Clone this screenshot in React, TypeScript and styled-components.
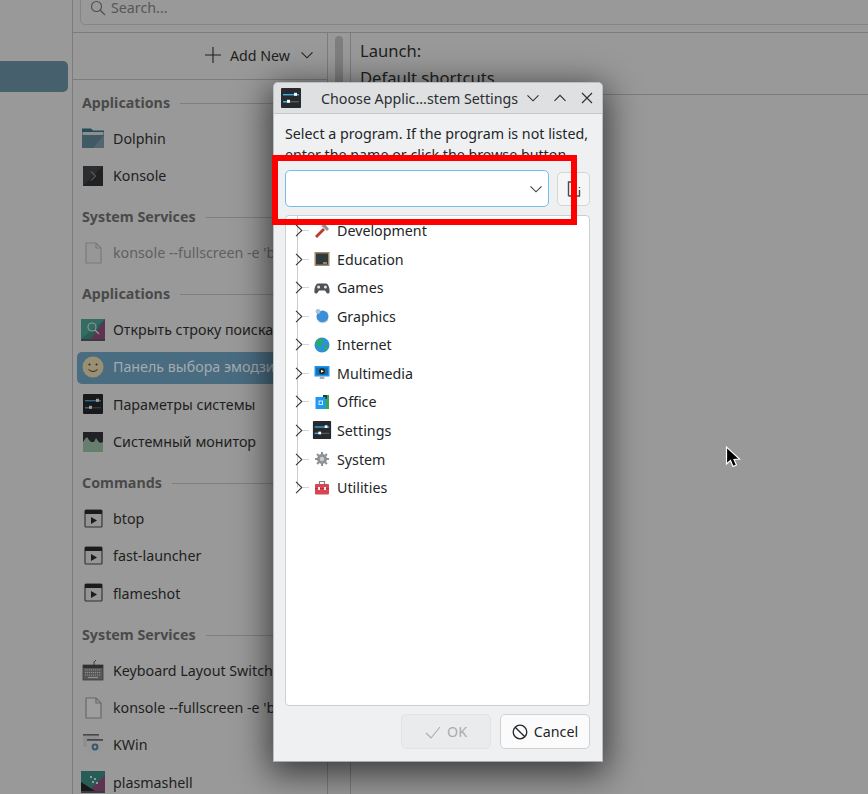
import React from "react";
import styled, { createGlobalStyle } from "styled-components";

const Global = createGlobalStyle`
  html, body { margin: 0; padding: 0; background: #999; }
  body { font-family: "Noto Sans", sans-serif; font-size: 14.25px; }
  * { box-sizing: border-box; }
`;

/* ---------- dimmed parent window ---------- */
const Page = styled.div`
  position: relative; width: 868px; height: 794px; overflow: hidden;
  display: flex; background: #999; color: #1e1f20;
`;
const Sidebar = styled.aside`
  width: 73px; flex: none; padding-top: 61px; border-right: 1px solid #7c7c7c;
`;
const SidebarPill = styled.div`
  width: 68px; height: 31px; background: #47606e; border-radius: 0 5px 5px 0;
`;
const Main = styled.main`flex: 1; min-width: 0; display: flex; flex-direction: column;`;
const SearchBar = styled.div`
  height: 33px; flex: none; padding-left: 7px; border-bottom: 1px solid #7c7c7c; overflow: hidden;
`;
const SearchBox = styled.div`
  height: 35px; margin-top: -10px; margin-right: -12px; border: 1px solid #858585; border-radius: 5px;
  display: flex; align-items: center; gap: 5px; padding: 0 9px; color: #575757;
`;
const Columns = styled.div`flex: 1; min-height: 0; display: flex;`;
const ListColumn = styled.section`
  width: 255px; flex: none; border-right: 1px solid #7c7c7c; display: flex; flex-direction: column;
`;
const AddBar = styled.div`
  height: 47px; flex: none; border-bottom: 1px solid #7c7c7c; display: flex; align-items: center;
  justify-content: flex-end; padding: 0 13px 2px 0; gap: 9px; color: #1e1f20;
`;
const AddChevron = styled.span`display: block; margin-left: 1px; height: 14px; svg { display: block; }`;
const List = styled.div`
  padding: 1px 0 0 4px; overflow: hidden; flex: 1; min-height: 0; display: flex; flex-direction: column;
`;
const SectionHead = styled.div`
  height: 39.67px; flex: none; padding: 12px 0 0 5px; display: flex; align-items: flex-start; gap: 10px;
  font-weight: 700; color: #4a4a4a; line-height: 20px;
  &::after { content: ""; flex: 1; height: 1px; background: #7f7f7f; margin-top: 10px; }
`;
const Row = styled.div<{ $selected?: boolean; $muted?: boolean }>`
  height: 31.33px; flex: none; margin: 3px 0; width: 320px; padding: 0 0 2px 5px; display: flex; align-items: center; gap: 9px;
  border-radius: 5px; white-space: nowrap;
  background: ${(p) => (p.$selected ? "#4a6c80" : "transparent")};
  color: ${(p) => (p.$selected ? "#a3abaf" : p.$muted ? "#606060" : "#1e1f20")};
`;
const ListIcon = styled.span`
  width: 22px; height: 22px; flex: none; display: block; filter: brightness(0.62) saturate(0.75);
  svg { display: block; }
`;
const ScrollTrack = styled.div`
  width: 23px; flex: none; border-right: 1px solid #7c7c7c; padding: 3px 7px 0 7px;
`;
const ScrollThumb = styled.div`
  height: 200px; background: #7e7e7e; border-radius: 4px;
`;
const RightPanel = styled.section`flex: 1; min-width: 0; display: flex; flex-direction: column;`;
const RightHead = styled.div`
  height: 62px; flex: none; border-bottom: 1px solid #7c7c7c; padding: 4px 0 0 9px; line-height: 27px; font-size: 16.6px;
  overflow: hidden; white-space: nowrap;
`;

/* ---------- dialog ---------- */
const Dialog = styled.div`
  position: absolute; left: 273px; top: 82px; width: 330px; height: 680px;
  display: flex; flex-direction: column; background: #eff0f1; color: #232629;
  border: 1px solid #bcbebf; border-bottom-color: #a9abad; border-radius: 5px 5px 0 0;
  box-shadow: 0 8px 34px 4px rgba(0, 0, 0, 0.62);
`;
const TitleBar = styled.header`
  height: 31px; flex: none; display: flex; align-items: center; padding: 0 8px 0 6px;
  background: #dee0e2; border-bottom: 1px solid #c4c6c8; border-radius: 4px 4px 0 0;
`;
const TitleText = styled.div`flex: 1; margin-left: 19px; white-space: nowrap; color: #2b2e31;`;
const TitleButtons = styled.div`display: flex; gap: 13px; color: #2b2e31; svg { display: block; }`;
const Body = styled.div`flex: 1; min-height: 0; display: flex; flex-direction: column; padding: 9px 12px 12px 11px;`;
const Prompt = styled.p`
  margin: 0; height: 47px; line-height: 21px; white-space: nowrap; overflow: hidden;
`;
const PickRow = styled.div`display: flex; align-items: center; gap: 8px; height: 37px; flex: none;`;
const Combo = styled.div`
  flex: 1; height: 37px; background: #fff; border: 1px solid #6ec0ee; border-radius: 5px;
  display: flex; align-items: center; justify-content: flex-end; padding-right: 5px; color: #3a3d40;
`;
const BrowseButton = styled.div`
  width: 33px; height: 34px; flex: none; background: #f5f6f6; border: 1px solid #d3d5d6; border-radius: 5px;
  display: flex; align-items: center; justify-content: center; color: #4a4d4f;
`;
const Tree = styled.div`
  flex: 1; min-height: 0; margin-top: 8px; padding-top: 0.4px; background: #fff; border: 1px solid #cdcfd0; border-radius: 4px;
`;
const TreeRow = styled.div`height: 28.56px; display: flex; align-items: center; white-space: nowrap;`;
const Branch = styled.span<{ $last?: boolean }>`
  width: 28px; height: 100%; flex: none; padding-left: 9px; display: flex; align-items: center; color: #33363a;
  background:
    linear-gradient(#c9cbcc, #c9cbcc) 11px 0 / 1px ${(p) => (p.$last ? "50%" : "100%")} no-repeat,
    linear-gradient(#d4d5d6, #d4d5d6) 17px 50% / 6px 1px no-repeat;
  svg { display: block; }
`;
const TreeIcon = styled.span`
  width: 16px; height: 16px; flex: none; margin-right: 7px; display: flex; align-items: center; justify-content: center;
  svg { display: block; flex: none; }
`;
const Actions = styled.footer`display: flex; justify-content: flex-end; gap: 9px; margin-top: 8px; flex: none;`;
const ActionButton = styled.button<{ $disabled?: boolean }>`
  width: 90px; height: 35px; display: flex; align-items: center; justify-content: center; gap: 6px;
  font: inherit; border-radius: 5px; padding: 0;
  background: ${(p) => (p.$disabled ? "#eaebec" : "#fbfbfc")};
  border: 1px solid ${(p) => (p.$disabled ? "#e2e3e4" : "#cfd1d2")};
  color: ${(p) => (p.$disabled ? "#a9abad" : "#232629")};
  svg { display: block; }
`;

/* ---------- overlays ---------- */
const RedFrame = styled.div`
  position: absolute; left: 272px; top: 155px; width: 305px; height: 70px; border: 6px solid #ff0000;
`;
const Cursor = styled.svg`position: absolute; left: 724px; top: 445px;`;

/* ---------- icons ---------- */
const Chevron = ({ up }: { up?: boolean }) => (
  <svg width="14" height="14" viewBox="0 0 14 14" fill="none" stroke="currentColor" strokeWidth="1.1">
    <path d={up ? "M1.5 9.8 L7 4.3 L12.5 9.8" : "M1.5 4.3 L7 9.8 L12.5 4.3"} />
  </svg>
);
const ChevronRight = () => (
  <svg width="8" height="13" viewBox="0 0 8 13" fill="none" stroke="currentColor" strokeWidth="1.1">
    <path d="M1 0.8 L6.8 6.5 L1 12.2" />
  </svg>
);
const SettingsIcon = ({ s = 22 }: { s?: number }) => (
  <svg width={s} height={s} viewBox="0 0 22 22">
    <rect x="1" y="1" width="20" height="20" rx="1" fill="#26292d" />
    <rect x="3" y="7" width="16" height="1.4" fill="#3daee9" />
    <rect x="14" y="5.8" width="3" height="3" fill="#fcfcfc" />
    <rect x="3" y="14" width="16" height="1.4" fill="#55595e" />
    <rect x="3" y="14" width="6" height="1.4" fill="#3daee9" />
    <rect x="7" y="12.8" width="3" height="3" fill="#fcfcfc" />
  </svg>
);
const FolderIcon = () => (
  <svg width="22" height="22" viewBox="0 0 22 22">
    <path d="M0 1.5 H9 L11 3.5 H22 V21 H0 Z" fill="#2f7d9e" />
    <rect x="0.5" y="5" width="21" height="3" fill="#dfe7ea" />
    <path d="M0 8 H22 V21 H0 Z" fill="#5b93ab" />
    <path d="M11 21 L22 8 V21 Z" fill="#7da6b7" />
  </svg>
);
const KonsoleIcon = () => (
  <svg width="22" height="22" viewBox="0 0 22 22">
    <rect x="1" y="1" width="20" height="20" fill="#46484a" />
    <path d="M1 21 L21 1 V21 Z" fill="#333537" />
    <path d="M9 6.5 L13.5 11 L9 15.5" fill="none" stroke="#c4c6c8" strokeWidth="1" />
  </svg>
);
const FileIcon = ({ dim }: { dim?: boolean }) => (
  <svg width="22" height="22" viewBox="0 0 22 22" fill={dim ? "#f4f4f4" : "#ffffff"} stroke={dim ? "#c4c4c4" : "#a8a8a8"} strokeWidth="1.2">
    <path d="M4 1 H14 L19 6 V21 H4 Z" />
    <path d="M14 1 V6 H19" fill="none" />
  </svg>
);
const SearchTileIcon = () => (
  <svg width="24" height="22" viewBox="0 0 24 22" style={{ marginLeft: -1 }}>
    <rect x="0" y="0" width="24" height="20" fill="#2a9d8f" />
    <path d="M24 0 V20 H10 Z" fill="#a94a8c" />
    <path d="M0 20 L24 0 H0 Z" fill="#39b5a2" />
    <circle cx="11" cy="8" r="4" fill="none" stroke="#f3f3f3" strokeWidth="1.1" />
    <path d="M14 11 L18 15" stroke="#f3f3f3" strokeWidth="1.3" />
    <rect x="0" y="20" width="24" height="2" fill="#5d6166" />
  </svg>
);
const SmileIcon = () => (
  <svg width="22" height="22" viewBox="0 0 22 22">
    <circle cx="11" cy="11" r="10.5" fill="#fde6a8" />
    <circle cx="7.5" cy="8.5" r="1" fill="#4c4331" />
    <circle cx="14.5" cy="8.5" r="1" fill="#4c4331" />
    <path d="M6.5 13.5 Q11 17.5 15.5 13.5" fill="none" stroke="#4c4331" strokeWidth="1" />
  </svg>
);
const MonitorIcon = () => (
  <svg width="22" height="22" viewBox="0 0 22 22">
    <rect x="1" y="1" width="20" height="20" fill="#31363b" />
    <path d="M1 21 V11 L3 8 L5 6 L7 9 L9 11 L12 11 L14 7 L16 10 L18 12 L21 11 V21 Z" fill="#9ad0a8" />
  </svg>
);
const RunIcon = () => (
  <svg width="22" height="22" viewBox="0 0 22 22">
    <rect x="3" y="2" width="17" height="17" rx="1" fill="#f0f0f0" stroke="#4a4d50" strokeWidth="1.1" />
    <rect x="3" y="2" width="17" height="4" fill="#2a2c2f" />
    <path d="M9 9 L15 12.5 L9 16 Z" fill="#2a2c2f" />
  </svg>
);
const KeyboardIcon = () => (
  <svg width="22" height="22" viewBox="0 0 22 22">
    <path d="M12 6 V3 L14 1" fill="none" stroke="#5a5d60" strokeWidth="1" />
    <rect x="1" y="6" width="20" height="15" fill="#8a8d90" stroke="#5e6164" strokeWidth="0.8" />
    <rect x="1" y="6" width="20" height="3" fill="#4a4d50" />
    <path d="M3 11 H19 M3 13.5 H19 M3 16 H19" stroke="#e8e8e8" strokeWidth="1.2" strokeDasharray="1.2 0.8" />
    <path d="M6 18.5 H16" stroke="#e8e8e8" strokeWidth="1.2" />
  </svg>
);
const KWinIcon = () => (
  <svg width="22" height="22" viewBox="0 0 22 22">
    <rect x="1" y="0" width="16" height="13" fill="#e4e6e8" />
    <rect x="1" y="0" width="16" height="1.6" fill="#70757a" />
    <rect x="5" y="5" width="16" height="14" fill="#f2f3f4" />
    <rect x="5" y="5" width="16" height="1.8" fill="#70757a" />
    <circle cx="13" cy="13" r="3.4" fill="#4a90b8" />
    <circle cx="13" cy="13" r="1.4" fill="#f2f3f4" />
  </svg>
);
const PlasmaIcon = () => (
  <svg width="24" height="22" viewBox="0 0 24 22" style={{ marginLeft: -1 }}>
    <rect x="0" y="0" width="24" height="20" fill="#2a9d8f" />
    <path d="M24 4 V20 H8 Z" fill="#a94a8c" />
    <path d="M0 20 V11 L14 20 Z" fill="#26272b" />
    <path d="M9 5 h2 v2 h-2 z M13 7 h2 v2 h-2 z M11 10 h2 v2 h-2 z M15 11 h2 v2 h-2 z" fill="#f4f4f4" />
    <rect x="0" y="20" width="24" height="2" fill="#5d6166" />
  </svg>
);
const Hammer = () => (
  <svg width="16" height="16" viewBox="0 0 16 16">
    <path d="M1 13 L9 5 L11 7 L3 15 Z" fill="#c0392b" />
    <path d="M7 3 L11 1 L15 6 L13 8 L10 5 Z" fill="#8f9396" />
  </svg>
);
const Board = () => (
  <svg width="16" height="16" viewBox="0 0 16 16">
    <rect x="0.5" y="1" width="15" height="14" fill="#a58a68" />
    <rect x="2" y="2.5" width="12" height="11" fill="#2f3a3f" />
    <rect x="9" y="11.5" width="4" height="1" fill="#cfd6d8" />
  </svg>
);
const Gamepad = () => (
  <svg width="16" height="16" viewBox="0 0 16 16">
    <path d="M4 3.5 H12 C14.5 3.5 16 9 15.5 12.5 C15 14 13 14 12 12 L11 10.5 H5 L4 12 C3 14 1 14 .5 12.5 C0 9 1.5 3.5 4 3.5 Z" fill="#4d5358" />
    <circle cx="4.6" cy="7" r="1.5" fill="#e2e4e6" />
    <circle cx="11.4" cy="7" r="1.5" fill="#e2e4e6" />
  </svg>
);
const GraphicsBall = () => (
  <svg width="16" height="16" viewBox="0 0 16 16">
    <circle cx="8.5" cy="8.5" r="6" fill="#3a8fd8" />
    <circle cx="4" cy="3.5" r="2.4" fill="#a9c3d3" />
    <path d="M4 13 A7 7 0 0 0 14 12" stroke="#c4cfd6" strokeWidth="1.2" fill="none" />
  </svg>
);
const Globe = () => (
  <svg width="16" height="16" viewBox="0 0 16 16">
    <circle cx="8" cy="8" r="7.5" fill="#2f8fd8" />
    <path d="M3 3 L8 1.5 L10 4 L7 6 L8 9 L5 10 L2 7 Z" fill="#27ae60" />
    <path d="M10 9 L14 8 L13 12 L10 14 Z" fill="#27ae60" />
  </svg>
);
const Screen = () => (
  <svg width="16" height="16" viewBox="0 0 16 16">
    <rect x="0.5" y="1" width="15" height="10.5" fill="#1d99f3" />
    <rect x="2" y="2.5" width="12" height="7.5" fill="#1b6fae" />
    <circle cx="8" cy="6.2" r="3" fill="#1f2326" />
    <path d="M7 4.7 L10 6.2 L7 7.7 Z" fill="#f4f4f4" />
    <path d="M6 11.5 H10 L10.5 14 H5.5 Z" fill="#a6aaad" />
  </svg>
);
const OfficeIcon = () => (
  <svg width="16" height="16" viewBox="0 0 16 16">
    <rect x="9" y="1" width="6" height="14" fill="#3aa655" />
    <path d="M9 1 L13 1 L13 5 L9 5 Z" fill="#1f3d2b" />
    <rect x="1.5" y="3" width="10" height="12" fill="#1d99f3" />
    <rect x="5" y="7" width="3.5" height="3.5" fill="none" stroke="#d8eefc" strokeWidth="1" />
  </svg>
);
const Gear = () => (
  <svg width="16" height="16" viewBox="0 0 16 16">
    <g fill="#8e9296">
      <circle cx="8" cy="8" r="5" />
      {[0, 45, 90, 135].map((a) => (
        <rect key={a} x="7" y="1" width="2" height="14" transform={`rotate(${a} 8 8)`} />
      ))}
    </g>
    <circle cx="8" cy="8" r="2.2" fill="#c9ccce" />
  </svg>
);
const Toolbox = () => (
  <svg width="16" height="16" viewBox="0 0 16 16">
    <path d="M5.5 4 V1.5 H10.5 V4" fill="none" stroke="#7d8286" strokeWidth="1.2" />
    <rect x="1" y="4" width="14" height="10.5" rx="1" fill="#da4453" />
    <rect x="1" y="8" width="14" height="1" fill="#a93240" />
    <rect x="4" y="7" width="2" height="3" fill="#f2f2f2" />
    <rect x="10" y="7" width="2" height="3" fill="#f2f2f2" />
  </svg>
);

type Item = { label: string; icon: React.ReactNode; selected?: boolean; muted?: boolean };
type Section = { title: string; items: Item[] };

const sections: Section[] = [
  { title: "Applications", items: [
    { label: "Dolphin", icon: <FolderIcon /> },
    { label: "Konsole", icon: <KonsoleIcon /> },
  ] },
  { title: "System Services", items: [
    { label: "konsole --fullscreen -e 'btop'", icon: <FileIcon dim />, muted: true },
  ] },
  { title: "Applications", items: [
    { label: "Открыть строку поиска", icon: <SearchTileIcon /> },
    { label: "Панель выбора эмодзи", icon: <SmileIcon />, selected: true },
    { label: "Параметры системы", icon: <SettingsIcon /> },
    { label: "Системный монитор", icon: <MonitorIcon /> },
  ] },
  { title: "Commands", items: [
    { label: "btop", icon: <RunIcon /> },
    { label: "fast-launcher", icon: <RunIcon /> },
    { label: "flameshot", icon: <RunIcon /> },
  ] },
  { title: "System Services", items: [
    { label: "Keyboard Layout Switcher", icon: <KeyboardIcon /> },
    { label: "konsole --fullscreen -e 'btop'", icon: <FileIcon /> },
    { label: "KWin", icon: <KWinIcon /> },
    { label: "plasmashell", icon: <PlasmaIcon /> },
  ] },
];

const categories: { label: string; icon: React.ReactNode }[] = [
  { label: "Development", icon: <Hammer /> },
  { label: "Education", icon: <Board /> },
  { label: "Games", icon: <Gamepad /> },
  { label: "Graphics", icon: <GraphicsBall /> },
  { label: "Internet", icon: <Globe /> },
  { label: "Multimedia", icon: <Screen /> },
  { label: "Office", icon: <OfficeIcon /> },
  { label: "Settings", icon: <SettingsIcon s={20} /> },
  { label: "System", icon: <Gear /> },
  { label: "Utilities", icon: <Toolbox /> },
];

export default function App() {
  return (
    <Page>
      <Global />
      <Sidebar><SidebarPill /></Sidebar>
      <Main>
        <SearchBar>
          <SearchBox>
            <svg width="16" height="16" viewBox="0 0 16 16" fill="none" stroke="#4d4d4d" strokeWidth="1.1">
              <circle cx="6.5" cy="6.5" r="5" />
              <path d="M10 10 L15 15" />
            </svg>
            Search...
          </SearchBox>
        </SearchBar>
        <Columns>
          <ListColumn>
            <AddBar>
              <svg width="16" height="16" viewBox="0 0 16 16" stroke="currentColor" strokeWidth="1.1">
                <path d="M8 0 V16 M0 8 H16" />
              </svg>
              Add New
              <AddChevron><Chevron /></AddChevron>
            </AddBar>
            <List>
              {sections.map((s, i) => (
                <React.Fragment key={i}>
                  <SectionHead>{s.title}</SectionHead>
                  {s.items.map((it, j) => (
                    <Row key={j} $selected={it.selected} $muted={it.muted}>
                      <ListIcon>{it.icon}</ListIcon>
                      {it.label}
                    </Row>
                  ))}
                </React.Fragment>
              ))}
            </List>
          </ListColumn>
          <ScrollTrack><ScrollThumb /></ScrollTrack>
          <RightPanel>
            <RightHead>Launch:<br />Default shortcuts</RightHead>
          </RightPanel>
        </Columns>
      </Main>

      <Dialog>
        <TitleBar>
          <SettingsIcon s={22} />
          <TitleText>Choose Applic...stem Settings</TitleText>
          <TitleButtons>
            <Chevron /><Chevron up />
            <svg width="14" height="14" viewBox="0 0 14 14" stroke="currentColor" strokeWidth="1.1"><path d="M2 2 L12 12 M12 2 L2 12" /></svg>
          </TitleButtons>
        </TitleBar>
        <Body>
          <Prompt>Select a program. If the program is not listed,<br />enter the name or click the browse button.</Prompt>
          <PickRow>
            <Combo><Chevron /></Combo>
            <BrowseButton>
              <svg width="16" height="16" viewBox="0 0 16 16" fill="none" stroke="currentColor" strokeWidth="1.4">
                <path d="M2.5 15 V1 H9 M2.5 15 H9 M13.5 6 V7 M13.5 9 V15 H11" />
              </svg>
            </BrowseButton>
          </PickRow>
          <Tree>
            {categories.map((c, i) => (
              <TreeRow key={c.label}>
                <Branch $last={i === categories.length - 1}><ChevronRight /></Branch>
                <TreeIcon>{c.icon}</TreeIcon>
                {c.label}
              </TreeRow>
            ))}
          </Tree>
          <Actions>
            <ActionButton $disabled disabled>
              <svg width="16" height="16" viewBox="0 0 16 16" fill="none" stroke="currentColor" strokeWidth="1.1"><path d="M1 9 L6 14 L15 3" /></svg>
              OK
            </ActionButton>
            <ActionButton>
              <svg width="16" height="16" viewBox="0 0 16 16" fill="none" stroke="currentColor" strokeWidth="1.3"><circle cx="8" cy="8" r="6.8" /><path d="M3.2 3.2 L12.8 12.8" /></svg>
              Cancel
            </ActionButton>
          </Actions>
        </Body>
      </Dialog>

      <RedFrame />
      <Cursor width="18" height="26" viewBox="0 0 18 26">
        <path d="M2.5 2 V19 L6.5 15.5 L9 21.5 L12.5 20 L10 14.5 L15.5 14 Z" fill="#000" stroke="#fff" strokeWidth="1.2" />
      </Cursor>
    </Page>
  );
}
